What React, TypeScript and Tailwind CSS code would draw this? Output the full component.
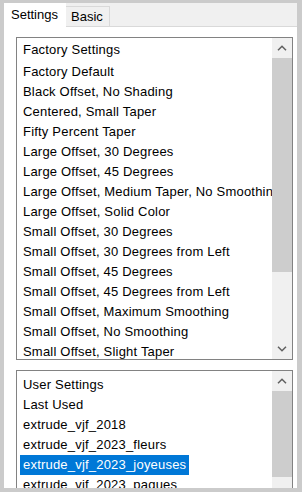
const factory = [
  'Factory Default',
  'Black Offset, No Shading',
  'Centered, Small Taper',
  'Fifty Percent Taper',
  'Large Offset, 30 Degrees',
  'Large Offset, 45 Degrees',
  'Large Offset, Medium Taper, No Smoothing',
  'Large Offset, Solid Color',
  'Small Offset, 30 Degrees',
  'Small Offset, 30 Degrees from Left',
  'Small Offset, 45 Degrees',
  'Small Offset, 45 Degrees from Left',
  'Small Offset, Maximum Smoothing',
  'Small Offset, No Smoothing',
  'Small Offset, Slight Taper',
  'Small Offset, Solid Color',
]

const user = [
  'Last Used',
  'extrude_vjf_2018',
  'extrude_vjf_2023_fleurs',
  'extrude_vjf_2023_joyeuses',
  'extrude_vjf_2023_paques',
  'extrude_vjf_2024',
]

const Chevron = ({ down = false }: { down?: boolean }) => (
  <svg width="10" height="6" viewBox="0 0 10 6" className={down ? 'rotate-180' : ''}>
    <polyline points="1,5.2 5,1.2 9,5.2" fill="none" stroke="#606060" strokeWidth="1.5" />
  </svg>
)

const Scrollbar = ({ thumbTop, thumbHeight, showDown = true }: { thumbTop: number; thumbHeight: number; showDown?: boolean }) => (
  <div className="w-[20px] shrink-0 flex flex-col bg-[#f0f0f0]">
    <div className="h-[20px] flex items-center justify-center"><Chevron /></div>
    <div className="flex-1 flex flex-col">
      <div style={{ height: thumbTop }} />
      <div className="bg-[#cdcdcd]" style={{ height: thumbHeight }} />
    </div>
    {showDown && <div className="h-[20px] flex items-center justify-center"><Chevron down /></div>}
  </div>
)

export default function App() {
  return (
    <div className="w-[302px] h-[492px] bg-[#cbcbcb] pt-[3px] pl-[4px] overflow-hidden font-['Liberation_Sans',Arial,sans-serif] text-[13px] text-black">
      <div className="w-[293px] h-[485px] bg-white overflow-hidden flex flex-col">
        {/* tabs */}
        <div className="h-[24px] flex items-start bg-[#f0f0f0] shrink-0">
          <div className="w-[62px] h-[24px] bg-white pl-[7px] pt-[4px] leading-[16px]">Settings</div>
          <div className="mt-[3px] w-[44px] h-[21px] border-t border-r border-b border-[#d9d9d9] pl-[5px] pt-[2px] leading-[16px]">Basic</div>
          <div className="flex-1 h-[24px] border-b border-[#d9d9d9]" />
        </div>

        <div className="pl-[12px] pt-[10px] flex flex-col gap-[10px] tracking-[0.2px]">
          {/* factory list */}
          <div className="w-[277px] h-[323px] border border-[#828282] flex shrink-0">
            <div className="flex-1 overflow-hidden pl-[3px] pt-[2px] whitespace-nowrap">
              <div className="h-[22px] leading-[20px] px-[3px]">Factory Settings</div>
              {factory.map(f => (
                <div key={f} className="h-[20px] leading-[20px] px-[3px]">{f}</div>
              ))}
            </div>
            <Scrollbar thumbTop={0} thumbHeight={214} />
          </div>

          {/* user list */}
          <div className="w-[277px] h-[200px] border border-[#828282] flex shrink-0">
            <div className="flex-1 overflow-hidden pl-[3px] pt-[4px] whitespace-nowrap">
              <div className="h-[20px] leading-[20px] px-[3px]">User Settings</div>
              {user.map(u => (
                <div key={u} className="h-[20px] leading-[20px]">
                  {u === 'extrude_vjf_2023_joyeuses'
                    ? <span className="inline-block h-[20px] px-[3px] bg-[#0078d7] text-white">{u}</span>
                    : <span className="px-[3px]">{u}</span>}
                </div>
              ))}
            </div>
            <Scrollbar thumbTop={0} thumbHeight={86} showDown={false} />
          </div>
        </div>
      </div>
    </div>
  )
}
